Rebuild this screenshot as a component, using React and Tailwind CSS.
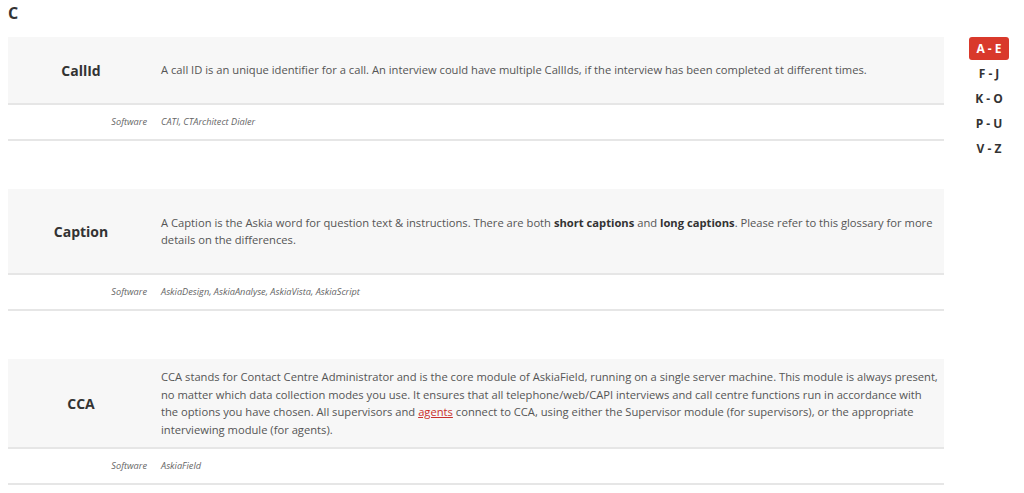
import React from "react";

const entries = [
  {
    term: "CallId",
    h: "h-[68px]",
    desc: (
      <>
        A call ID is an unique identifier for a call. An interview could have multiple CallIds, if the
        interview has been completed at different times.
      </>
    ),
    software: "CATI, CTArchitect Dialer",
  },
  {
    term: "Caption",
    h: "h-[86px]",
    desc: (
      <>
        A Caption is the Askia word for question text &amp; instructions. There are both{" "}
        <strong className="font-bold text-[#333]">short captions</strong> and{" "}
        <strong className="font-bold text-[#333]">long captions</strong>. Please refer to this glossary for
        more details on the differences.
      </>
    ),
    software: "AskiaDesign, AskiaAnalyse, AskiaVista, AskiaScript",
  },
  {
    term: "CCA",
    h: "h-[90px]",
    desc: (
      <>
        CCA stands for Contact Centre Administrator and is the core module of AskiaField, running on a
        single server machine. This module is always present, no matter which data collection modes you
        use. It ensures that all telephone/web/CAPI interviews and call centre functions run in accordance
        with the options you have chosen. All supervisors and{" "}
        <a href="#" className="text-[#c9302c] underline">
          agents
        </a>{" "}
        connect to CCA, using either the Supervisor module (for supervisors), or the appropriate
        interviewing module (for agents).
      </>
    ),
    software: "AskiaField",
  },
];

const ranges = ["A - E", "F - J", "K - O", "P - U", "V - Z"];

function Entry({ e }) {
  return (
    <div className="mb-[48px]">
      <div className={`flex items-center bg-[#f7f7f7] border-b-2 border-[#e6e6e6] ${e.h}`}>
        <div className="w-[146px] shrink-0 text-center text-[14px] font-bold text-[#333]">{e.term}</div>
        <div className="flex-1 pl-[7px] pr-[4px] text-[11.2px] leading-[17.5px] text-[#555]">{e.desc}</div>
      </div>
      <div className="flex h-[36px] items-center border-b-2 border-[#e6e6e6]">
        <div className="w-[146px] shrink-0 pr-[7px] text-right text-[9.2px] italic text-[#666]">Software</div>
        <div className="flex-1 px-[7px] text-[9.2px] italic text-[#666]">{e.software}</div>
      </div>
    </div>
  );
}

export default function App() {
  return (
    <div
      className="flex min-h-screen bg-white"
      style={{ fontFamily: '"Open Sans", "DejaVu Sans", sans-serif' }}
    >
      <div className="w-[944px] shrink-0 pl-2">
        <h2 className="pt-[1px] text-[16px] leading-[24px] font-bold text-[#333]">C</h2>
        <div className="mt-[12px]">
          {entries.map((e) => (
            <Entry key={e.term} e={e} />
          ))}
        </div>
      </div>
      <nav className="ml-[25px] mt-[37px] flex w-[40px] flex-col items-center">
        {ranges.map((r, i) => (
          <a
            key={r}
            href="#"
            className={`flex w-[40px] items-center justify-center rounded-[3px] text-[12px] font-bold ${
              i === 0 ? "mb-[1px] h-[23px] bg-[#d9392b] text-white" : "h-[25px] text-[#333]"
            }`}
          >
            {r}
          </a>
        ))}
      </nav>
    </div>
  );
}
